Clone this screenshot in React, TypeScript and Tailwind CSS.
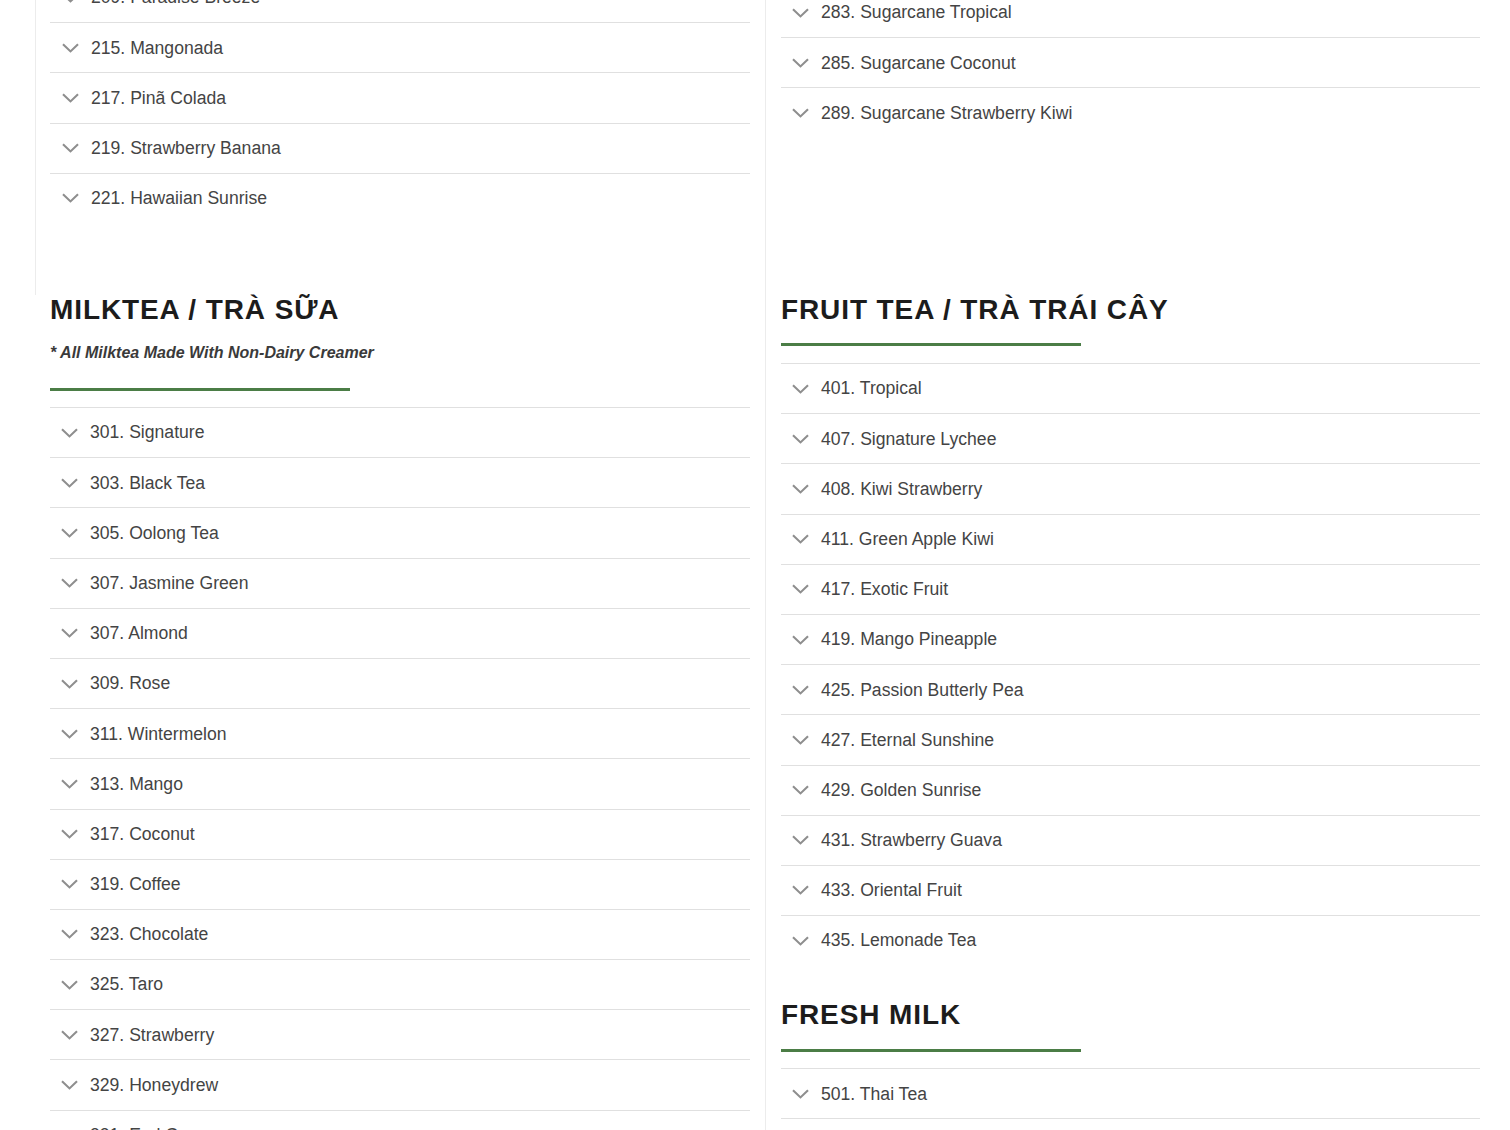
const font = { fontFamily: '"Liberation Sans", Arial, sans-serif' };

const topLeft = [
  '209. Paradise Breeze',
  '215. Mangonada',
  '217. Pinã Colada',
  '219. Strawberry Banana',
  '221. Hawaiian Sunrise',
];

const topRight = ['283. Sugarcane Tropical', '285. Sugarcane Coconut', '289. Sugarcane Strawberry Kiwi'];

const milktea = [
  '301. Signature',
  '303. Black Tea',
  '305. Oolong Tea',
  '307. Jasmine Green',
  '307. Almond',
  '309. Rose',
  '311. Wintermelon',
  '313. Mango',
  '317. Coconut',
  '319. Coffee',
  '323. Chocolate',
  '325. Taro',
  '327. Strawberry',
  '329. Honeydrew',
  '331. Earl Grey',
];

const fruitTea = [
  '401. Tropical',
  '407. Signature Lychee',
  '408. Kiwi Strawberry',
  '411. Green Apple Kiwi',
  '417. Exotic Fruit',
  '419. Mango Pineapple',
  '425. Passion Butterly Pea',
  '427. Eternal Sunshine',
  '429. Golden Sunrise',
  '431. Strawberry Guava',
  '433. Oriental Fruit',
  '435. Lemonade Tea',
];

const freshMilk = ['501. Thai Tea', '503. Matcha'];

function Chevron() {
  return (
    <svg width="17" height="10" viewBox="0 0 17 10" fill="none" className="shrink-0">
      <polyline points="1,1.2 8.5,8.4 16,1.2" stroke="#8e8e8e" strokeWidth="2.1" />
    </svg>
  );
}

function MenuList({ items, className = '' }: { items: string[]; className?: string }) {
  return (
    <ul className={className}>
      {items.map((label, i) => (
        <li
          key={i}
          className="flex h-[50.2px] items-center gap-[12px] border-t border-[#e0e0e0] pl-[11px] text-[17.6px] text-[#444]"
        >
          <Chevron />
          <span>{label}</span>
        </li>
      ))}
    </ul>
  );
}

function Heading({ children }: { children: React.ReactNode }) {
  return (
    <h2 className="text-[28px] leading-[30px] font-bold tracking-[0.9px] text-[#1c1c1c]">{children}</h2>
  );
}

function GreenBar({ className = '' }: { className?: string }) {
  return <div className={`h-[3px] w-[300px] bg-[#4b7d46] ${className}`} />;
}

export default function App() {
  return (
    <div className="h-screen overflow-hidden bg-white pl-[35px]" style={font}>
      {/* upper row, scrolled part of the previous sections */}
      <div className="flex h-[295px] overflow-hidden">
        <div className="w-[730px] border-l border-[#ececec] pl-[14px] pr-[15px]">
          <MenuList items={topLeft} className="-mt-[28px] [&>li]:pl-[12px]" />
        </div>
        <div className="w-[730px] border-l border-[#ececec] px-[15px]">
          <MenuList items={topRight} className="-mt-[13px]" />
        </div>
      </div>

      {/* lower row */}
      <div className="flex">
        <div className="w-[730px] px-[15px]">
          <Heading>MILKTEA / TRÀ SỮA</Heading>
          <p className="mt-[16px] text-[16px] leading-[24px] font-bold italic text-[#3a3a3a]">
            * All Milktea Made With Non-Dairy Creamer
          </p>
          <GreenBar className="mt-[23px]" />
          <MenuList items={milktea} className="mt-[16px]" />
        </div>
        <div className="w-[730px] border-l border-[#ececec] px-[15px]">
          <Heading>FRUIT TEA / TRÀ TRÁI CÂY</Heading>
          <GreenBar className="mt-[18px]" />
          <MenuList items={fruitTea} className="mt-[17px]" />

          <div className="mt-[35px]">
            <Heading>FRESH MILK</Heading>
            <GreenBar className="mt-[19px]" />
            <MenuList items={freshMilk} className="mt-[16px]" />
          </div>
        </div>
      </div>
    </div>
  );
}
